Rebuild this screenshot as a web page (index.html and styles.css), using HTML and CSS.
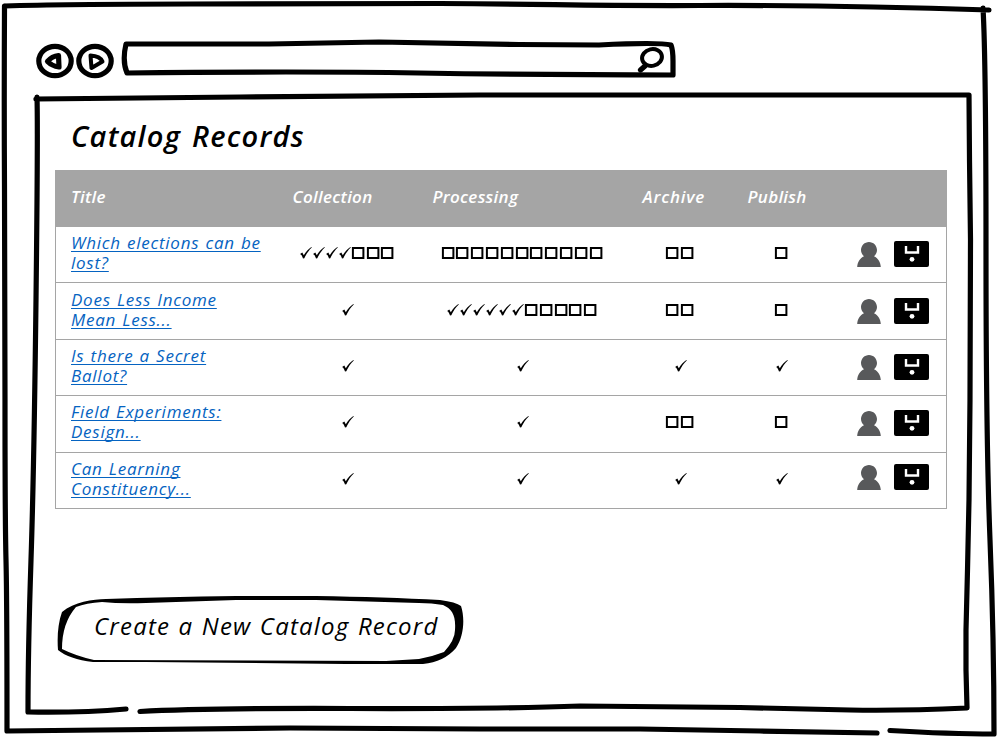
FILE: index.html
```html
<!DOCTYPE html>
<html lang="en">
<head>
<meta charset="utf-8">
<title>Catalog Records</title>
<link rel="stylesheet" href="styles.css">
</head>
<body>
<svg class="defs" aria-hidden="true">
  <symbol id="check" viewBox="0 0 13 14"><path d="M1.1 7.9 3.3 6.5 4.8 9.2C7.2 5.6 9.8 2.8 12.4 1.1L12.8 1.5C9.7 4.4 7.3 8 5.3 12.3L4 12.5C3.4 10.6 2.8 8.8 1.1 7.9Z"/></symbol>
  <symbol id="box" viewBox="0 0 14.8 14"><path d="M1.9 2.1H12.4V11.9H1.9Z" fill="none" stroke="#000" stroke-width="2"/></symbol>
  <symbol id="user" viewBox="0 0 24 26"><path d="M12 1C16.400 1 20 4.600 20 9 20 11.500 18.800 13.700 17 15.300 21 17.300 23.600 21 23.800 26H.2C.4 21 3 17.300 7 15.300 5.200 13.700 4 11.500 4 9 4 4.600 7.600 1 12 1Z"/></symbol>
  <symbol id="save" viewBox="0 0 35 26"><rect width="35" height="26" rx="2"/><path d="M12 5V11.500H24V5" fill="none" stroke="#fff" stroke-width="2.400"/><circle cx="18" cy="18.300" r="2.400" fill="#fff"/></symbol>
</svg>
<div class="window">
  <svg class="sketch" viewBox="0 0 998 738" aria-hidden="true">
    <path d="M4.500 6Q4 100 4.500 190T5 400 6 560 7 731L100 730 290 728 480 729 640 729 760 731 877 733M890 730.500Q950 734 994 734Q994 640 990 540T986 250 983 8M5 6C60 4 120 4 190 4L440 3.500C560 4 580 6 700 5.500S900 7 989 10"/>
    <path d="M36 99Q150 98 240 97T480 95H969L969.500 160 970.500 240 970 400 969 500 967.500 570 966 630V670L967 708Q900 711 850 710L740 707.500 580 706Q500 709 350 708.500T140 711.500M126 709Q80 713 28 712Q28 650 31 560T36 300 37 97"/>
  </svg>
  <header class="toolbar">
    <svg class="nav" viewBox="0 0 38 36"><ellipse cx="19" cy="18" rx="16.200" ry="14.700"/><path d="M11.500 18.500Q16 13 22.500 12.500L23 24Q16 23 11.500 18.500Z"/></svg>
    <svg class="nav" viewBox="0 0 38 36"><ellipse cx="19" cy="18" rx="16.200" ry="14.700"/><path class="thin" d="M14.500 12.500Q24 13 26.500 18.500L15.500 25Z"/></svg>
    <div class="address">
      <svg viewBox="0 0 560 44"><path d="M7 8L150 8 260 6 400 8.500 480 9Q540 6 552 9Q554 14 554 25L554 39Q420 39 300 37T8 37Q3 25 7 8Z"/><ellipse cx="533" cy="21.500" rx="10" ry="8.300" transform="rotate(-12 533 21.500)" class="thin"/><path d="m526 30-4.500 4"/></svg>
    </div>
  </header>
  <main>
    <h1>Catalog Records</h1>
    <table>
      <thead><tr><th>Title</th><th class="c2">Collection</th><th class="c3">Processing</th><th class="c4">Archive</th><th class="c5">Publish</th><th></th></tr></thead>
      <tbody id="records"></tbody>
    </table>
    <button>
      <svg viewBox="0 0 410 70" aria-hidden="true"><path fill-rule="evenodd" d="M6 18C18 8 37 5 50 5Q110 3 180 2H260Q330 3 384 6 400 8 405 12C409 24 408 42 400 54Q388 68 367 70H290L90 68H37Q13 65 2 56C1 43 2 29 6 18ZM20 13Q6 29 6 55 20 62 38 66L330 67 363 65Q375 63 388 58 399 46 399 36C400 21 396 15 387 11Q376 9 363 9L260 6H180L90 9Q65 10 46 8 30 9 20 13Z"/></svg>
      <span>Create a New Catalog Record</span>
    </button>
  </main>
</div>
<script src="script.js"></script>
</body>
</html>
```
FILE: styles.css
```css
* { box-sizing: border-box; }
body { margin: 0; background: #fff; color: #000; font-family: "Open Sans", "Noto Sans", sans-serif; font-style: italic; }
.defs { position: absolute; width: 0; height: 0; }
.window { position: relative; width: 998px; height: 738px; overflow: hidden; }
.sketch { position: absolute; inset: 0; width: 998px; height: 738px; }
.sketch path, .nav, .address svg { fill: none; stroke: #000; stroke-width: 5.200; stroke-linecap: round; stroke-linejoin: round; }
.nav .thin, .address .thin { stroke-width: 4; }
.toolbar { position: relative; display: flex; padding: 43px 0 0 36px; height: 95px; }
.nav { width: 38px; height: 36px; margin-right: 2px; }
.address { width: 560px; height: 44px; margin: -7px 0 0 3px; }
.address svg { display: block; width: 560px; height: 44px; }
main { position: relative; padding: 20px 0 0 55px; }
h1 { margin: 0 0 15px 16px; height: 40px; font-size: 29px; line-height: 42px; font-weight: 600; letter-spacing: 1.200px; word-spacing: 2px; white-space: nowrap; }
table { width: 892px; table-layout: fixed; border-collapse: collapse; border: 1px solid #a5a5a5; }
th { height: 56px; padding: 0 0 5px 15px; background: #a5a5a5; color: #fff; font-size: 17px; font-weight: 600; letter-spacing: .3px; text-align: left; width: 117px; }
th:first-child { width: 222px; }
th.c2 { width: 140px; }
th.c3 { width: 210px; }
th.c4 { width: 106px; letter-spacing: .8px; }
th.c5 { width: 96px; padding-left: 14px; }
td { height: 56.400px; padding: 0 1px 3px 0; border-bottom: 1px solid #a5a5a5; text-align: center; vertical-align: middle; }
td:first-child { padding: 0 0 3px 15px; text-align: left; line-height: 20px; font-size: 17px; letter-spacing: .75px; word-spacing: 1px; white-space: nowrap; }
a { color: #0563c1; text-decoration: underline; text-decoration-thickness: 1px; text-underline-offset: 2px; text-decoration-skip-ink: none; }
.marks, .actions { display: flex; justify-content: center; }
.check { width: 13px; height: 14px; }
.box { width: 14.800px; height: 14px; }
.actions { justify-content: flex-start; padding-left: 27px; gap: 13px; }
td:last-child { padding-bottom: 1px; }
tr:nth-child(1) td:last-child { padding-bottom: 0; }
tr:nth-child(4) td:last-child { padding-bottom: 2px; }
tr:nth-child(5) td:last-child { padding-bottom: 6px; }
.user { width: 24px; height: 26px; fill: #58595b; }
.save { width: 35px; height: 26px; }
button { position: relative; display: block; width: 410px; height: 70px; margin: 85px 0 0 1px; padding: 0 0 7px 38px; border: 0; background: none; color: #000; font: inherit; font-size: 24px; letter-spacing: 1.200px; word-spacing: 1px; text-align: left; white-space: nowrap; }
button svg { position: absolute; inset: 0; width: 410px; height: 70px; }
```
FILE: script.js
```javascript
const records = [
  ["Which elections can be", "lost?", [4, 3], [0, 11], [0, 2], [0, 1]],
  ["Does Less Income", "Mean Less...", [1, 0], [6, 5], [0, 2], [0, 1]],
  ["Is there a Secret", "Ballot?", [1, 0], [1, 0], [1, 0], [1, 0]],
  ["Field Experiments:", "Design...", [1, 0], [1, 0], [0, 2], [0, 1]],
  ["Can Learning", "Constituency...", [1, 0], [1, 0], [1, 0], [1, 0]]
];
const icon = name => `<svg class="${name}"><use href="#${name}"/></svg>`;
const marks = ([done, open]) => `<td><div class="marks">${icon("check").repeat(done)}${icon("box").repeat(open)}</div></td>`;
document.getElementById("records").innerHTML = records.map(([first, second, ...steps]) =>
  `<tr><td><a href="#">${first}<br>${second}</a></td>${steps.map(marks).join("")}<td><div class="actions">${icon("user")}${icon("save")}</div></td></tr>`
).join("");
```
